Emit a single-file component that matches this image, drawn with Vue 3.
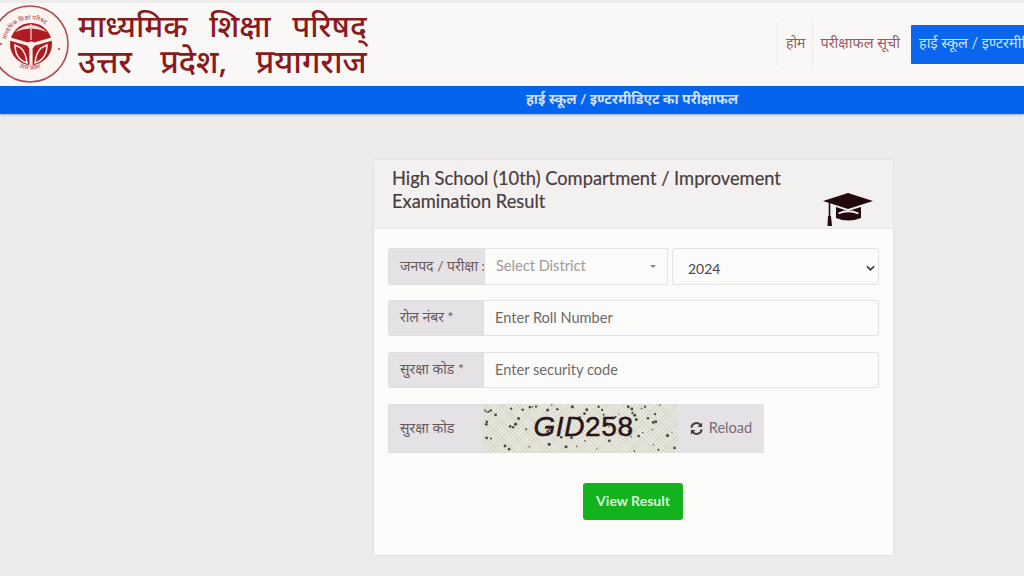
<script setup>
const noise = (n) => {
  const v = Math.sin(n * 127.1 + 3.7) * 43758.5453
  return v - Math.floor(v)
}
const dots = Array.from({ length: 78 }, (_, i) => ({
  x: noise(i) * 192 + 1,
  y: noise(i + 200) * 47 + 1,
  r: 0.5 + noise(i + 400) * 1.1
}))
</script>

<template>
  <div class="page">
    <header class="top">
      <div class="brand">
        <svg class="emblem" viewBox="0 0 74 83" aria-hidden="true">
          <circle cx="30" cy="41" r="38" fill="#fbf5f2" stroke="#b24a50" stroke-width="1.6" />
          <path id="emb-top" d="M6 41 A24.5 24.5 0 0 1 55 41" fill="none" />
          <path id="emb-bot" d="M9 56 A27 27 0 0 0 52 56" fill="none" />
          <text class="emb-text"><textPath href="#emb-top" startOffset="6%">माध्यमिक शिक्षा परिषद</textPath></text>
          <text class="emb-text"><textPath href="#emb-bot" startOffset="26%">उत्तर प्रदेश</textPath></text>
          <circle cx="31" cy="41" r="21" fill="#ad1c22" />
          <path d="M15 29 Q31 15 47 29 Q31 22 15 29Z" fill="#f6d9cf" />
          <path d="M31 21 V37" stroke="#f6d9cf" stroke-width="1.2" />
          <path d="M10 36 L31 42 L52 36 M31 42 V62" fill="none" stroke="#fbf0ea" stroke-width="3.2" />
          <path d="M15 42 Q15 56 27 60 Q26 50 21 45Z M47 42 Q47 56 35 60 Q36 50 41 45Z" fill="none" stroke="#fbf0ea" stroke-width="1.5" />
          <circle cx="31" cy="42" r="3.4" fill="#fbf0ea" />
          <circle cx="1" cy="41" r="1.1" fill="#b24a50" />
          <circle cx="59" cy="46" r="1.1" fill="#b24a50" />
        </svg>
        <div class="title">
          <div class="t1">माध्यमिक शिक्षा परिषद्</div>
          <div class="t2">उत्तर प्रदेश, प्रयागराज</div>
        </div>
      </div>
      <nav class="nav">
        <a class="link home">होम</a>
        <a class="link list">परीक्षाफल सूची</a>
        <a class="active">हाई स्कूल / इण्टरमीडिएट</a>
      </nav>
    </header>
    <div class="bar">हाई स्कूल / इण्टरमीडिएट का परीक्षाफल</div>

    <main class="main">
      <section class="card">
        <div class="card-head">
          <h1>High School (10th) Compartment / Improvement Examination Result</h1>
          <svg class="cap" viewBox="0 0 50 36" aria-hidden="true">
            <path d="M25 0 L50 8 L25 16 L0 8Z" fill="#230a0e" />
            <path d="M13 14 L25 18 L38 14 V25 Q25 30 13 25Z" fill="#230a0e" />
            <path d="M15.5 20.5 Q25 16 35.5 20.5" fill="none" stroke="#f3f1f0" stroke-width="1.8" />
            <path d="M6.5 9 V24" stroke="#230a0e" stroke-width="1.6" />
            <path d="M5 23 H8 L9 33 H4.5Z" fill="#230a0e" />
          </svg>
        </div>
        <div class="card-body">
          <div class="row first">
            <span class="label narrow">जनपद / परीक्षा :</span>
            <div class="select-box">
              <span class="ph">Select District</span>
              <span class="caret"></span>
            </div>
            <div class="year">
              <span>2024</span>
              <svg viewBox="0 0 10 6" class="chev"><path d="M1 1 L5 5 L9 1" fill="none" stroke="#333" stroke-width="1.8" /></svg>
            </div>
          </div>
          <div class="row">
            <span class="label">रोल नंबर *</span>
            <div class="input"><span class="ph dark">Enter Roll Number</span></div>
          </div>
          <div class="row">
            <span class="label">सुरक्षा कोड *</span>
            <div class="input"><span class="ph dark">Enter security code</span></div>
          </div>
          <div class="captcha-row">
            <span class="label cap-label">सुरक्षा कोड</span>
            <div class="captcha">
              <svg class="noise" viewBox="0 0 195 49" aria-hidden="true">
                <circle v-for="(d, i) in dots" :key="i" :cx="d.x" :cy="d.y" :r="d.r" fill="#4a4a3e" />
              </svg>
              <span class="code"><i>GID</i>258</span>
            </div>
            <div class="reload">
              <svg viewBox="0 0 16 16" class="re-icon" aria-hidden="true">
                <path d="M2.5 7 A5.5 5.5 0 0 1 12.5 4.5" fill="none" stroke="#4a3c48" stroke-width="2.2" />
                <path d="M14 1.5 V6.5 H9Z" fill="#4a3c48" />
                <path d="M13.5 9 A5.5 5.5 0 0 1 3.5 11.5" fill="none" stroke="#4a3c48" stroke-width="2.2" />
                <path d="M2 14.5 V9.5 H7Z" fill="#4a3c48" />
              </svg>
              <span>Reload</span>
            </div>
          </div>
          <div class="actions"><button class="go" type="button">View Result</button></div>
        </div>
      </section>
    </main>
  </div>
</template>

<style>
html, body { margin: 0; background: #eeecea; }
</style>

<style scoped>
.page {
  width: 1024px;
  height: 576px;
  overflow: hidden;
  background: #eeecea;
  font-family: Lato, "Noto Sans", sans-serif;
  display: flex;
  flex-direction: column;
}
.top {
  height: 83px;
  margin-top: 3px;
  background: #f9f8f7;
  display: flex;
  justify-content: space-between;
  align-items: stretch;
  flex-shrink: 0;
  overflow: hidden;
}
.brand { display: flex; align-items: center; gap: 4px; }
.emblem { width: 74px; height: 83px; flex-shrink: 0; }
.emb-text { font-size: 6px; fill: #a8323a; font-family: "Noto Sans", sans-serif; }
.title {
  color: #8b1a1e;
  font-family: "Noto Sans", "DejaVu Sans", sans-serif;
  font-weight: 500;
  white-space: nowrap;
  padding-bottom: 3px;
}
.t1 { font-size: 31px; line-height: 36px; word-spacing: 13.5px; }
.t2 { font-size: 32px; line-height: 36px; word-spacing: 20px; }
.nav {
  display: flex;
  align-items: flex-start;
  padding-top: 19px;
  flex-shrink: 0;
  width: 247px;
  overflow: hidden;
}
.link {
  font-size: 14.5px;
  color: #9a5a5e;
  height: 44px;
  line-height: 41px;
  padding: 0 8px;
  border-left: 1px solid #ecebe9;
  white-space: nowrap;
}
.link.home { font-size: 14px; padding-right: 7px; }
.link.list { padding-left: 7px; padding-right: 11px; }
.active {
  background: #0a66ee;
  color: #cfe4fb;
  font-size: 14.5px;
  height: 39px;
  line-height: 35px;
  padding: 0 8px;
  margin-top: 3px;
  white-space: nowrap;
  border-radius: 1px;
}
.bar {
  height: 28px;
  line-height: 26px;
  background: #0464ee;
  color: #cfe0f8;
  text-align: center;
  font-size: 14px;
  font-weight: 700;
  padding-left: 240px;
  box-sizing: border-box;
  box-shadow: 0 1px 2px rgba(0, 60, 140, .35);
  flex-shrink: 0;
}
.main { display: flex; justify-content: flex-start; padding: 46px 0 0 374px; }
.card {
  width: 519px;
  height: 395px;
  background: #fbfbf9;
  box-shadow: 0 0 3px rgba(0, 0, 0, .08);
  flex-shrink: 0;
}
.card-head {
  height: 69px;
  background: #f3f1f0;
  border-bottom: 1px solid #e8e6e4;
  box-sizing: border-box;
  padding: 7px 18px 0;
  position: relative;
}
h1 {
  margin: 0;
  width: 420px;
  font-size: 18.3px;
  font-weight: 400;
  line-height: 23px;
  color: #4a3c3e;
  -webkit-text-stroke: 0.2px #4a3c3e;
}
.cap { position: absolute; left: 449px; top: 33px; width: 50px; height: 36px; }
.card-body { padding: 19px 14px 0; }
.row {
  display: flex;
  height: 36px;
  margin-bottom: 16px;
  width: 491px;
}
.row.first { height: 37px; margin-bottom: 15px; }
.label {
  width: 96px;
  flex-shrink: 0;
  box-sizing: border-box;
  background: #e4e2e4;
  color: #6a5a60;
  font-size: 14px;
  padding: 0 0 3px 11px;
  display: flex;
  align-items: center;
  border: 1px solid #e0dee0;
  border-radius: 3px 0 0 3px;
  white-space: nowrap;
  overflow: hidden;
}
.label.narrow { width: 97px; }
.select-box {
  width: 183px;
  box-sizing: border-box;
  background: #fbfbf9;
  border: 1px solid #e6e4e2;
  border-left: 0;
  display: flex;
  align-items: center;
  justify-content: space-between;
  padding: 0 11px 3px;
}
.ph { color: #a09a9a; font-size: 14.6px; }
.ph.dark { color: #6f6a6a; }
.caret {
  width: 0;
  height: 0;
  border: 3.5px solid transparent;
  border-top-color: #888;
  border-bottom: 0;
  margin-top: 3px;
}
.year {
  margin-left: 4px;
  flex: 1;
  box-sizing: border-box;
  background: #fbfbf9;
  border: 1px solid #e4e2e0;
  border-radius: 3px;
  display: flex;
  align-items: center;
  justify-content: space-between;
  padding: 3px 3px 0 15px;
  font-size: 14px;
  color: #4c4648;
}
.chev { width: 9px; height: 6px; }
.input {
  flex: 1;
  box-sizing: border-box;
  background: #fbfbf9;
  border: 1px solid #e4e2e0;
  border-left: 0;
  border-radius: 0 3px 3px 0;
  display: flex;
  align-items: center;
  padding: 0 11px 2px;
}
.captcha-row { display: flex; height: 49px; width: 376px; }
.cap-label { width: 95px; border-radius: 0; }
.captcha {
  width: 195px;
  position: relative;
  background-color: #e8e8de;
  background-image:
    repeating-linear-gradient(45deg, rgba(120, 120, 100, .1) 0 1px, transparent 1px 3px),
    repeating-linear-gradient(-45deg, rgba(120, 120, 100, .1) 0 1px, transparent 1px 3px);
  display: flex;
  align-items: center;
  justify-content: center;
  overflow: hidden;
}
.noise { position: absolute; inset: 0; width: 100%; height: 100%; }
.code {
  position: relative;
  font-family: "Liberation Sans", sans-serif;
  font-size: 28px;
  color: #2a1518;
  letter-spacing: 0.6px;
  -webkit-text-stroke: 0.5px #2a1518;
  padding: 0 0 3px 6px;
}
.code i { font-style: italic; }
.reload {
  flex: 1;
  background: #e4e2e4;
  display: flex;
  align-items: center;
  justify-content: center;
  gap: 5px;
  font-size: 14.6px;
  color: #7a6a78;
  padding: 0 1px 3px 0;
}
.re-icon { width: 15px; height: 15px; margin-top: 3px; }
.actions { display: flex; justify-content: flex-start; padding: 30px 0 0 195px; }
.go {
  width: 100px;
  height: 37px;
  background: #12b31c;
  color: #d8f5d8;
  border: 0;
  border-radius: 3px;
  font-family: inherit;
  font-size: 14px;
  font-weight: 700;
  padding: 0 0 2px;
}
</style>
